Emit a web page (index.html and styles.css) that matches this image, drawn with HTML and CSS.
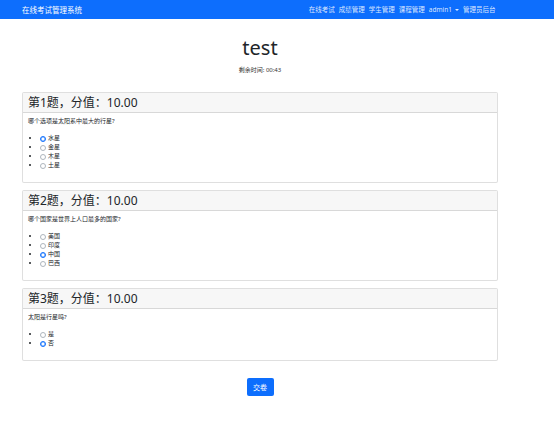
FILE: index.html
```html
<!DOCTYPE html>
<html lang="zh">
<head>
<meta charset="utf-8">
<title>在线考试管理系统</title>
<link rel="stylesheet" href="styles.css">
</head>
<body>
<nav class="navbar">
  <a class="brand" href="#">在线考试管理系统</a>
  <ul class="nav-links">
    <li><a href="#">在线考试</a></li>
    <li><a href="#">成绩管理</a></li>
    <li><a href="#">学生管理</a></li>
    <li><a href="#">课程管理</a></li>
    <li><a href="#" class="dropdown">admin1</a></li>
    <li><a href="#">管理员后台</a></li>
  </ul>
</nav>
<main class="container">
  <h1 class="title">test</h1>
  <p class="timer">剩余时间: 00:43</p>

  <section class="card">
    <div class="card-header">第1题，分值：10.00</div>
    <div class="card-body">
      <p class="question">哪个选项是太阳系中最大的行星?</p>
      <ul class="options">
        <li><label><input type="radio" name="q1" checked> 水星</label></li>
        <li><label><input type="radio" name="q1"> 金星</label></li>
        <li><label><input type="radio" name="q1"> 木星</label></li>
        <li><label><input type="radio" name="q1"> 土星</label></li>
      </ul>
    </div>
  </section>

  <section class="card">
    <div class="card-header">第2题，分值：10.00</div>
    <div class="card-body">
      <p class="question">哪个国家是世界上人口最多的国家?</p>
      <ul class="options">
        <li><label><input type="radio" name="q2"> 美国</label></li>
        <li><label><input type="radio" name="q2"> 印度</label></li>
        <li><label><input type="radio" name="q2" checked> 中国</label></li>
        <li><label><input type="radio" name="q2"> 巴西</label></li>
      </ul>
    </div>
  </section>

  <section class="card">
    <div class="card-header">第3题，分值：10.00</div>
    <div class="card-body">
      <p class="question">太阳是行星吗?</p>
      <ul class="options">
        <li><label><input type="radio" name="q3"> 是</label></li>
        <li><label><input type="radio" name="q3" checked> 否</label></li>
      </ul>
    </div>
  </section>

  <div class="actions">
    <button class="btn" type="button">交卷</button>
  </div>
</main>
</body>
</html>
```

FILE: styles.css
```css
* { box-sizing: border-box; }

html, body {
  margin: 0;
  padding: 0;
  background: #fff;
  color: #212529;
  font-family: "Noto Sans", "Noto Sans CJK SC", sans-serif;
}

.navbar {
  height: 19px;
  background: #0d6efd;
  display: flex;
  align-items: center;
  justify-content: space-between;
  padding: 0 58px 0 22px;
}

.brand {
  color: #fff;
  text-decoration: none;
  font-size: 7.5px;
  line-height: 10px;
}

.nav-links {
  list-style: none;
  display: flex;
  margin: 0;
  padding: 0;
  gap: 3px;
}

.nav-links a {
  display: block;
  color: rgba(255, 255, 255, 0.85);
  text-decoration: none;
  font-size: 6.5px;
  line-height: 10px;
  padding: 0 0.5px;
}

.dropdown::after {
  content: "";
  display: inline-block;
  margin-left: 3px;
  vertical-align: 1px;
  border-top: 2px solid rgba(255, 255, 255, 0.85);
  border-left: 2px solid transparent;
  border-right: 2px solid transparent;
}

.container {
  width: 476px;
  margin-left: 22px;
  padding-top: 17px;
  padding-bottom: 20px;
}

.title {
  margin: 0;
  text-align: center;
  font-weight: 400;
  font-size: 20px;
  line-height: 24px;
}

.timer {
  margin: 6px 0 17px;
  text-align: center;
  font-size: 6px;
  line-height: 9px;
  color: #333;
}

.card {
  border: 1px solid rgba(0, 0, 0, 0.125);
  border-radius: 2px;
  margin-bottom: 7px;
  background: #fff;
}

.card-header {
  height: 20px;
  background: #f7f7f7;
  border-bottom: 1px solid rgba(0, 0, 0, 0.125);
  padding: 0 5px;
  font-size: 12px;
  line-height: 20px;
  color: #212529;
}

.card-body {
  padding: 4px 5px 8px;
}

.question {
  margin: 0 0 8px;
  font-size: 6px;
  line-height: 9px;
}

.options {
  margin: 0 0 4px;
  padding-left: 12px;
  list-style: disc;
  font-size: 6px;
  line-height: 9px;
}

.options li {
  height: 9px;
}

.options label {
  display: inline-flex;
  align-items: center;
  gap: 2px;
  height: 9px;
  vertical-align: top;
}

.options input[type="radio"] {
  appearance: none;
  -webkit-appearance: none;
  margin: 0;
  width: 6px;
  height: 6px;
  border: 0.6px solid #adb5bd;
  border-radius: 50%;
  background: #fff;
}

.options input[type="radio"]:checked {
  border: 1.6px solid #0d6efd;
  background: #fff;
  box-shadow: inset 0 0 0 0.3px #0d6efd;
}

.actions {
  display: flex;
  justify-content: center;
  padding-top: 10px;
}

.btn {
  width: 27px;
  height: 18px;
  border: none;
  border-radius: 2px;
  background: #0d6efd;
  color: #fff;
  font-family: "Noto Sans CJK SC", sans-serif;
  font-size: 7px;
  padding: 0;
}
```
